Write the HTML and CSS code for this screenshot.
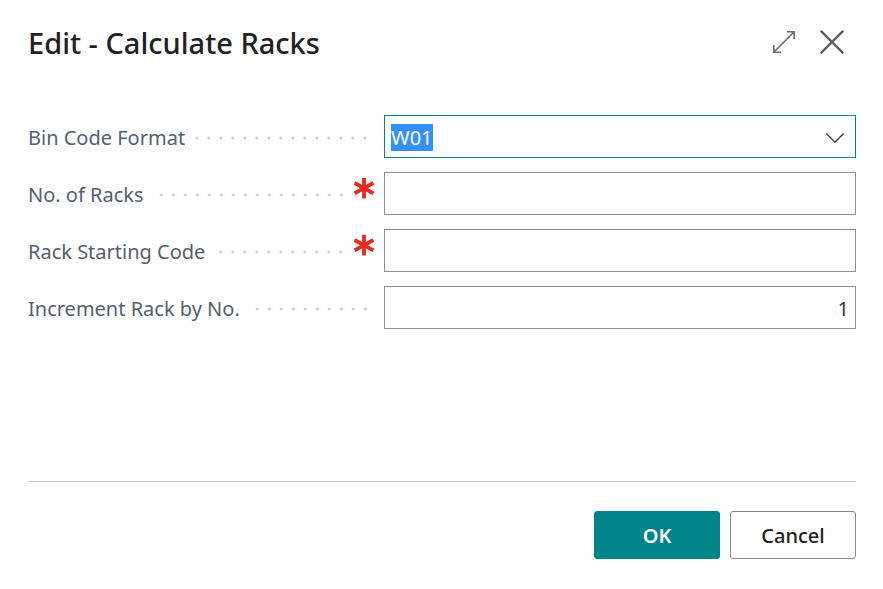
FILE: index.html
```html
<!DOCTYPE html>
<html lang="en">
<head>
<meta charset="utf-8">
<meta name="viewport" content="width=device-width, initial-scale=1">
<title>Edit - Calculate Racks</title>
<link rel="stylesheet" href="styles.css">
</head>
<body>
<main class="dialog">
  <header class="header">
    <h1 class="title">Edit - Calculate Racks</h1>
    <div class="tools">
      <button class="icon-button" type="button" aria-label="Expand">
        <svg width="24" height="24" viewBox="0 0 24 24" fill="none" stroke="#6b6b6b" stroke-width="1.6"><path d="M1.8 22.2 22.2 1.8M15 1.8h7.2V9M1.8 15v7.2H9"/></svg>
      </button>
      <button class="icon-button" type="button" aria-label="Close">
        <svg width="24" height="24" viewBox="0 0 24 24" fill="none" stroke="#5f5f5f" stroke-width="2.4"><path d="M.8.8l22.4 22.4M23.2.8.8 23.2"/></svg>
      </button>
    </div>
  </header>
  <form class="form">
    <div class="fields">
      <div class="row">
        <div class="caption"><label for="format">Bin Code Format</label><span class="leader"></span></div>
        <div class="combo">
          <input class="field" id="format" type="text" value="W01" autocomplete="off">
          <button class="chevron" type="button" aria-label="Choose a value">
            <svg width="20" height="12" viewBox="0 0 20 12" fill="none" stroke="#444" stroke-width="1.4"><path d="M1.4 1.6 10 10.2l8.6-8.6"/></svg>
          </button>
        </div>
      </div>
      <div class="row">
        <div class="caption"><label for="racks">No. of Racks</label><span class="leader"></span>
          <svg class="required" width="22" height="22" viewBox="0 0 22 22" stroke="#e52b20" stroke-width="3.8"><path d="M11 .8v20.8M1.6 6l18.8 10.4M20.4 6 1.6 16.4"/></svg></div>
        <input class="field" id="racks" type="text" required>
      </div>
      <div class="row">
        <div class="caption"><label for="start">Rack Starting Code</label><span class="leader"></span>
          <svg class="required" width="22" height="22" viewBox="0 0 22 22" stroke="#e52b20" stroke-width="3.8"><path d="M11 .8v20.8M1.6 6l18.8 10.4M20.4 6 1.6 16.4"/></svg></div>
        <input class="field" id="start" type="text" required>
      </div>
      <div class="row">
        <div class="caption"><label for="increment">Increment Rack by No.</label><span class="leader"></span></div>
        <input class="field number" id="increment" type="text" inputmode="numeric" value="1">
      </div>
    </div>
    <footer class="actions">
      <button class="button primary" type="submit">OK</button>
      <button class="button" type="button">Cancel</button>
    </footer>
  </form>
</main>
<script src="main.js"></script>
</body>
</html>
```
FILE: styles.css
```css
* { box-sizing: border-box; }

body {
  margin: 0;
  background: #fff;
  color: #212121;
  font: 20px/28px "Segoe UI", "Noto Sans", sans-serif;
}

.dialog {
  display: flex;
  flex-direction: column;
  min-height: 100vh;
  padding: 24px 27px 30px 28px;
}

.header {
  display: flex;
  align-items: center;
  justify-content: space-between;
  height: 40px;
}

.title {
  margin: 0;
  font-size: 29px;
  line-height: 38px;
  padding-bottom: 2px;
  font-weight: 500;
}

.tools {
  display: flex;
  gap: 24px;
  padding: 0 12px 4px 0;
}

.icon-button, .chevron {
  display: flex;
  padding: 0;
  border: 0;
  background: none;
}

.form {
  display: flex;
  flex: 1;
  flex-direction: column;
  justify-content: space-between;
  padding-top: 51px;
}

.fields {
  display: grid;
  gap: 14px;
}

.row {
  display: grid;
  grid-template-columns: 43fr 57fr;
}

.caption {
  display: flex;
  align-items: center;
  padding-top: 3px;
  padding-right: 9px;
  color: #545f70;
}

.leader {
  flex: 1;
  height: 4px;
  margin-left: 10px;
  background: radial-gradient(circle, #cccfd4 1px, transparent 2px) right center / 12px 4px repeat-x;
}

.leader:last-child { margin-right: 4px; }

.required {
  margin: 0 0 14px 6px;
}

.field {
  width: 100%;
  height: 43px;
  padding: 2px 6px 0;
  border: 1px solid #8a8f9c;
  border-radius: 0;
  outline: 0;
  background: #fff;
  color: #333;
  font: inherit;
}

.field:focus { border-color: #008489; }

.field::selection {
  background: #3390ff;
  color: #fff;
}

.number { text-align: right; }

.combo {
  display: grid;
  align-items: center;
}

.combo > * { grid-area: 1 / 1; }

.chevron {
  justify-self: end;
  margin: 3px 11px 0 0;
}

.actions {
  display: flex;
  justify-content: flex-end;
  gap: 10px;
  padding-top: 29px;
  border-top: 1px solid #c8c8c8;
}

.button {
  width: 126px;
  height: 48px;
  padding: 2px 0 0;
  border: 1px solid #8a8a8a;
  border-radius: 3px;
  background: #fff;
  color: #212121;
  font: inherit;
  font-weight: 500;
}

.primary {
  border-color: #008489;
  background: #008489;
  color: #fff;
  font-weight: 600;
}
```
FILE: main.js
```js
const format = document.getElementById("format");
format.focus();
format.select();
```
